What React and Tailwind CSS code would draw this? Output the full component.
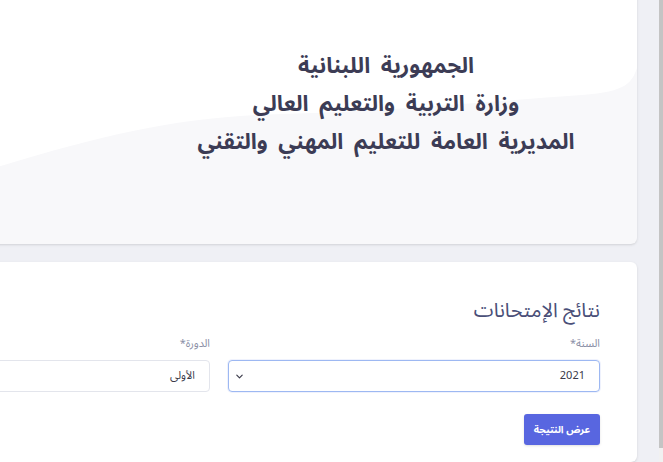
import React from 'react';

const ChevronDown = () => (
    <svg width="9" height="9" viewBox="0 0 10 10" fill="none" stroke="#3a3a4a" strokeWidth="1.3" strokeLinecap="round" strokeLinejoin="round">
        <path d="M2 3.5 L5 6.5 L8 3.5" />
    </svg>
);

const App = () => {
    return (
        <div
            dir="rtl"
            className="flex h-[462px] w-[663px] overflow-hidden bg-[#eff0f5]"
            style={{ fontFamily: '"Noto Sans Arabic", "DejaVu Sans", "Noto Sans", sans-serif' }}
        >
            {/* scrollbar strip */}
            <div className="flex w-[4px] shrink-0 flex-col">
                <div className="h-[448px] bg-[#c4c4c4]"></div>
                <div className="flex-1 bg-[#f1f1f1]"></div>
            </div>

            <main className="flex w-[680px] shrink-0 flex-col gap-[18px] pr-[22px]">
                {/* header card */}
                <section className="relative -mt-4 h-[260px] overflow-hidden rounded-md bg-[#f8f8fa] shadow-sm">
                    <svg className="absolute inset-0" width="655" height="260" viewBox="0 0 655 260" preserveAspectRatio="none">
                        <path d="M0 0 H655 V84 C650 98 645 108 600 111 C520 116 420 127 300 130 C200 132 120 150 0 188 Z" fill="#ffffff" />
                    </svg>
                    <div className="relative flex h-full flex-col items-center justify-center pl-[156px] pt-[2px] pb-[22px] text-[22px] font-bold leading-[38px] text-[#3c3c55] [word-spacing:5px]">
                        <p>الجمهورية اللبنانية</p>
                        <p>وزارة التربية والتعليم العالي</p>
                        <p>المديرية العامة للتعليم المهني والتقني</p>
                    </div>
                </section>

                {/* exam results card */}
                <section className="flex flex-1 flex-col rounded-md bg-white pr-[37px] pt-[34px] shadow-sm">
                    <h2 className="text-[20px] leading-[30px] text-[#4a4f78]">نتائج الإمتحانات</h2>

                    <div className="mt-[11px] grid grid-cols-[372px_372px] gap-x-[18px]">
                        <div className="flex flex-col">
                            <label className="text-[11px] leading-[14px] text-[#8b8fa6]">السنة*</label>
                            <div className="mt-[9px] flex h-[32px] items-center justify-between rounded-[4px] border border-[#9db8f2] bg-white pl-[6px] pr-[14px] shadow-[0_0_0_1px_rgba(120,150,240,0.12)]">
                                <span className="text-[11px] text-[#3a3a4a]">2021</span>
                                <ChevronDown />
                            </div>
                        </div>
                        <div className="flex flex-col">
                            <label className="text-[11px] leading-[14px] text-[#8b8fa6]">الدورة*</label>
                            <div className="mt-[9px] flex h-[32px] items-center rounded-[4px] border border-[#e3e5ec] bg-white pr-[14px]">
                                <span className="text-[11px] text-[#3a3a4a]">الأولى</span>
                            </div>
                        </div>
                    </div>

                    <div className="mt-[22px] flex">
                        <button className="h-[31px] w-[76px] rounded-[3px] bg-[#5866e0] text-[10px] font-bold text-white shadow-sm">
                            عرض النتيجة
                        </button>
                    </div>
                </section>
            </main>
        </div>
    );
};

export default App;
